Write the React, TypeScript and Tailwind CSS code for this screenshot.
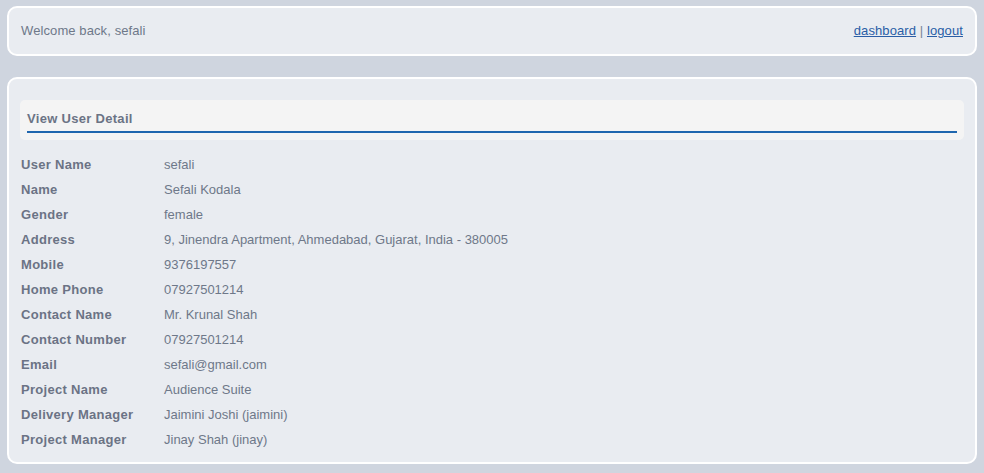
import React from 'react';

const details = [
  { label: 'User Name', value: 'sefali' },
  { label: 'Name', value: 'Sefali Kodala' },
  { label: 'Gender', value: 'female' },
  { label: 'Address', value: '9, Jinendra Apartment, Ahmedabad, Gujarat, India - 380005' },
  { label: 'Mobile', value: '9376197557' },
  { label: 'Home Phone', value: '07927501214' },
  { label: 'Contact Name', value: 'Mr. Krunal Shah' },
  { label: 'Contact Number', value: '07927501214' },
  { label: 'Email', value: 'sefali@gmail.com' },
  { label: 'Project Name', value: 'Audience Suite' },
  { label: 'Delivery Manager', value: 'Jaimini Joshi (jaimini)' },
  { label: 'Project Manager', value: 'Jinay Shah (jinay)' },
];

export default function App() {
  return (
    <div
      className="min-h-[473px] bg-[#cfd5df] pt-[6px] pb-[8px] px-[7px] text-[13px] text-[#6e7889]"
      style={{ fontFamily: '"Liberation Sans", Arial, sans-serif' }}
    >
      {/* Top bar */}
      <div className="h-[50px] flex items-center justify-between bg-[#e9ecf1] border-2 border-white rounded-[10px] px-[12px]">
        <span className="tracking-[0.1px]">Welcome back, sefali</span>
        <span className="text-[#7a8494] tracking-[0.1px]">
          <a href="#" className="text-[#2a5ea6] underline">dashboard</a>
          {' | '}
          <a href="#" className="text-[#2a5ea6] underline">logout</a>
        </span>
      </div>

      {/* Detail card */}
      <div className="mt-[21px] h-[387px] bg-[#e9ecf1] border-2 border-white rounded-[10px] pt-[21px] px-[11px]">
        <div className="bg-[#f4f4f4] rounded-[5px] px-[7px] pt-[8px] pb-[7px]">
          <h2 className="font-bold tracking-[0.3px] leading-[22px] pb-[1px] border-b-2 border-[#1f66ae] text-[#6b7385]">
            View User Detail
          </h2>
        </div>

        <div className="mt-[12px] pl-[1px]">
          {details.map((d) => (
            <div key={d.label} className="flex h-[25px] items-center">
              <div className="w-[143px] font-bold tracking-[0.3px] text-[#6b7385]">{d.label}</div>
              <div>{d.value}</div>
            </div>
          ))}
        </div>
      </div>
    </div>
  );
}
